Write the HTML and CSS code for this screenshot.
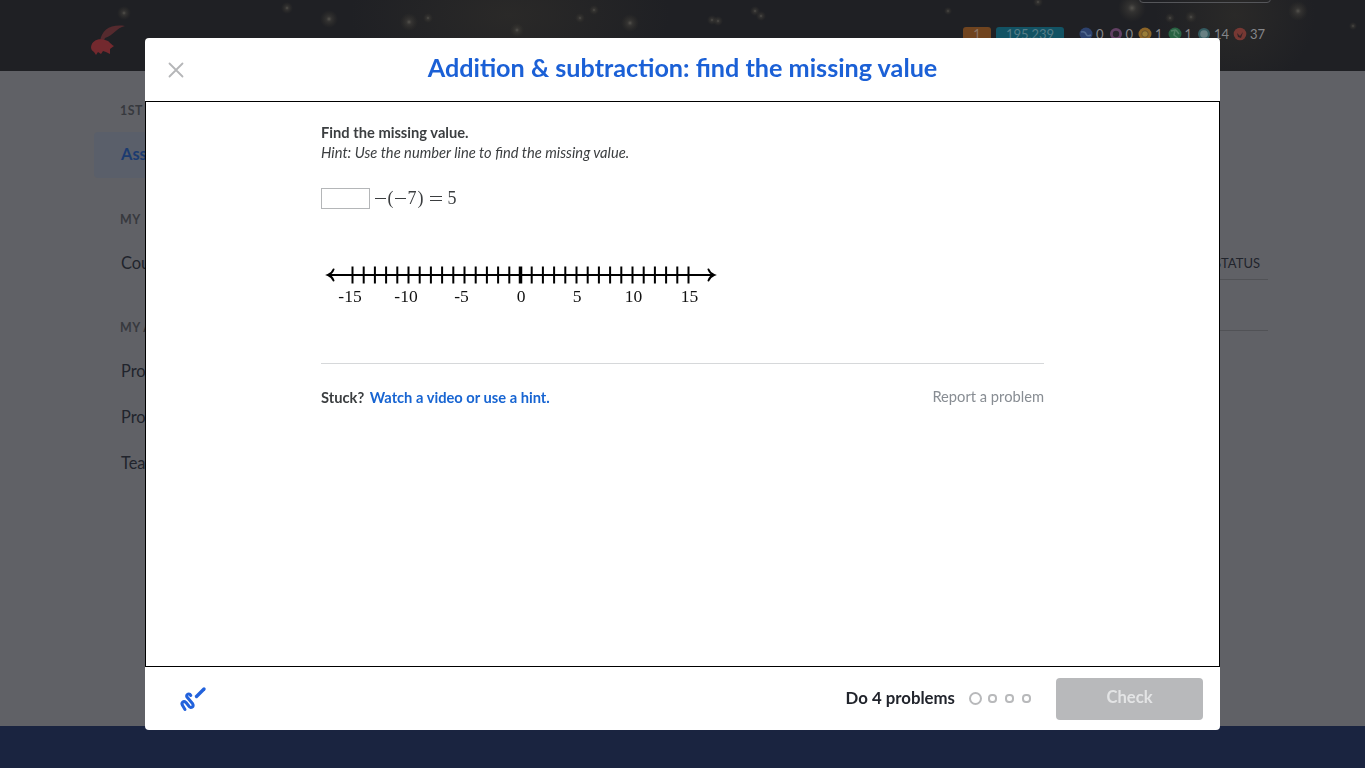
FILE: index.html
```
<!DOCTYPE html>
<html lang="en">
<head>
    <meta charset="UTF-8">
    <meta name="viewport" content="width=device-width, initial-scale=1.0">
    <title>Addition & subtraction: find the missing value</title>
    <link rel="stylesheet" href="styles.css">
</head>
<body>
    <div class="page">
        <header class="profile-header">
            <svg class="stars" width="1365" height="71" viewBox="0 0 1365 71">
                <defs>
                    <radialGradient id="star">
                        <stop offset="0" stop-color="#55534e"/>
                        <stop offset="0.3" stop-color="#403e3a" stop-opacity="0.6"/>
                        <stop offset="1" stop-color="#36332c" stop-opacity="0"/>
                    </radialGradient>
                    <radialGradient id="haze">
                        <stop offset="0" stop-color="#2a2928"/>
                        <stop offset="1" stop-color="#2a2928" stop-opacity="0"/>
                    </radialGradient>
                </defs>
                <ellipse cx="510" cy="15" rx="160" ry="80" fill="url(#haze)"/>
                <ellipse cx="1235" cy="15" rx="80" ry="75" fill="url(#haze)"/>
                <g fill="url(#star)">
                    <circle cx="124" cy="13" r="7"/>
                    <circle cx="287" cy="8" r="6"/>
                    <circle cx="329" cy="19" r="9"/>
                    <circle cx="409" cy="22" r="9"/>
                    <circle cx="428" cy="18" r="5"/>
                    <circle cx="517" cy="30" r="7"/>
                    <circle cx="580" cy="18" r="5"/>
                    <circle cx="594" cy="10" r="5"/>
                    <circle cx="630" cy="23" r="9"/>
                    <circle cx="712" cy="20" r="5"/>
                    <circle cx="718" cy="21" r="5"/>
                    <circle cx="755" cy="11" r="5"/>
                    <circle cx="761" cy="16" r="5"/>
                    <circle cx="948" cy="11" r="4"/>
                    <circle cx="1038" cy="2" r="5"/>
                    <circle cx="1132" cy="8" r="14"/>
                    <circle cx="1170" cy="18" r="5"/>
                    <circle cx="1191" cy="17" r="6"/>
                    <circle cx="1298" cy="11" r="10"/>
                    <circle cx="1353" cy="26" r="4"/>
                </g>
            </svg>
            <svg class="avatar" width="34" height="32" viewBox="0 0 34 32">
                <path d="M9 17C11 6 19 0 34 2C25 4 23 11 14 14L12 19Z" fill="#552a2e"/>
                <path d="M0 23C1 16 8 14 14 16C19 17 19 20 23 22L19 25L19 30L15 28L12 27L10 30L7 28L5 31L3 28C1 27 0 25 0 23Z" fill="#73292e"/>
            </svg>
            <div class="edit-button"></div>
            <div class="stats">
                <span class="streak">1</span>
                <span class="energy">195,239</span>
                <ul class="badges">
                    <li><svg width="14" height="14" viewBox="0 0 14 14"><circle cx="7" cy="7" r="6.5" fill="#2d426e"/><path d="M2 5Q6 4 7 7T12 8" fill="none" stroke="#536b90" stroke-width="1.6"/></svg>0</li>
                    <li><svg width="14" height="14" viewBox="0 0 14 14"><circle cx="7" cy="7" r="6" fill="#624064"/><circle cx="7" cy="7" r="3.2" fill="#29252d"/></svg>0</li>
                    <li><svg width="14" height="14" viewBox="0 0 14 14"><circle cx="7" cy="7" r="6.5" fill="#8c6427"/><circle cx="7" cy="7" r="3.3" fill="#9a7d38" stroke="#66502b"/></svg>1</li>
                    <li><svg width="14" height="14" viewBox="0 0 14 14"><circle cx="7" cy="7" r="6.5" fill="#286343"/><path d="M3 4L7 3L6 8L10 11M8 3L11 7" fill="none" stroke="#518065" stroke-width="1.5"/></svg>1</li>
                    <li><svg width="14" height="14" viewBox="0 0 14 14"><circle cx="7" cy="7" r="6" fill="#345b60"/><circle cx="7" cy="7" r="3.8" fill="#688083"/></svg>14</li>
                    <li><svg width="14" height="14" viewBox="0 0 14 14"><circle cx="7" cy="7" r="6.3" fill="#773833"/><path d="M4 6L7 9L10 5L8 11L5 10Z" fill="#312326"/></svg>37</li>
                </ul>
            </div>
        </header>

        <div class="page-body">
            <nav class="sidebar">
                <h3>1ST</h3>
                <a class="active">Ass</a>
                <h3>MY</h3>
                <a>Cou</a>
                <h3>MY A</h3>
                <a>Pro</a>
                <a>Pro</a>
                <a>Tea</a>
            </nav>
            <div class="assignments">
                <div class="assignments-head">STATUS</div>
                <div class="assignments-row"></div>
            </div>
        </div>

        <footer class="page-footer"></footer>
    </div>

    <div class="modal">
        <div class="modal-header">
            <button class="close" aria-label="Close">
                <svg width="16" height="16" viewBox="0 0 16 16"><path d="M1.5 1.5L14.5 14.5M14.5 1.5L1.5 14.5" stroke="#b5b6b8" stroke-width="1.8" stroke-linecap="round"/></svg>
            </button>
            <h1>Addition &amp; subtraction: find the missing value</h1>
        </div>

        <div class="modal-content">
            <div class="exercise">
                <p class="question">Find the missing value.</p>
                <p class="hint">Hint: Use the number line to find the missing value.</p>

                <div class="equation">
                    <input type="text" class="answer" aria-label="Answer">
                    <svg width="86" height="24" viewBox="0 0 86 24">
                        <g stroke="#3b3e40" stroke-width="1">
                            <path d="M1 12.5H12M21 12.5H32M56 10.5H68M56 14.5H68"/>
                        </g>
                        <text x="13.5" y="18">(</text>
                        <text x="33.5" y="18">7</text>
                        <text x="43.5" y="18">)</text>
                        <text x="73.5" y="18">5</text>
                    </svg>
                </div>

                <svg class="number-line" width="400" height="50" viewBox="0 0 400 50">
                    <g fill="none" stroke="#000" stroke-width="2">
                        <path d="M7 15H393"/>
                        <path d="M12.5 9.5Q11 13.5 7 15Q11 16.5 12.5 20.5M387.5 9.5Q389 13.5 393 15Q389 16.5 387.5 20.5" stroke-linecap="round"/>
                        <path d="M31.5 6.5v17M42.7 6.5v17M53.9 6.5v17M65.1 6.5v17M76.3 6.5v17M87.5 6.5v17M98.7 6.5v17M109.9 6.5v17M121.1 6.5v17M132.3 6.5v17M143.5 6.5v17M154.7 6.5v17M165.9 6.5v17M177.1 6.5v17M188.3 6.5v17M210.7 6.5v17M221.9 6.5v17M233.1 6.5v17M244.3 6.5v17M255.5 6.5v17M266.7 6.5v17M277.9 6.5v17M289.1 6.5v17M300.3 6.5v17M311.5 6.5v17M322.7 6.5v17M333.9 6.5v17M345.1 6.5v17M356.3 6.5v17M367.5 6.5v17"/>
                        <path d="M199.5 6.5v17" stroke-width="3.5"/>
                    </g>
                    <g text-anchor="middle">
                        <text x="29" y="42">-15</text>
                        <text x="85" y="42">-10</text>
                        <text x="140.5" y="42">-5</text>
                        <text x="200" y="42">0</text>
                        <text x="256" y="42">5</text>
                        <text x="312.5" y="42">10</text>
                        <text x="368.5" y="42">15</text>
                    </g>
                </svg>

                <div class="help">
                    <span class="stuck">Stuck? <a>Watch a video or use a hint.</a></span>
                    <a class="report">Report a problem</a>
                </div>
            </div>
        </div>

        <div class="modal-footer">
            <svg class="scratchpad" width="28" height="28" viewBox="0 0 28 28">
                <g fill="none" stroke="#2262dc" stroke-linecap="round" stroke-linejoin="round">
                    <path d="M11.8 10.5C10.5 7.8 6.8 9 7.8 11.8L13.5 18.5C15.5 22 11.5 24 9.8 21L7 17.5C4.5 15.2 1.8 18 3.6 20.5L6 24.5" stroke-width="3"/>
                    <path d="M17.5 11.5L25 4" stroke-width="3.4"/>
                </g>
            </svg>
            <div class="progress">
                <span class="progress-label">Do 4 problems</span>
                <span class="dot current"></span>
                <span class="dot"></span>
                <span class="dot"></span>
                <span class="dot"></span>
            </div>
            <button class="check" disabled>Check</button>
        </div>
    </div>
</body>
</html>
```
FILE: styles.css
```
* {
    box-sizing: border-box;
}
body {
    margin: 0;
    font-family: Lato, sans-serif;
    color: #21242c;
    overflow: hidden;
}
h1, h3, p, ul {
    margin: 0;
    padding: 0;
}
.page {
    height: 768px;
    display: flex;
    flex-direction: column;
    background: #606166;
}
.profile-header {
    position: relative;
    height: 71px;
    padding: 0 94px 0 91px;
    display: flex;
    justify-content: space-between;
    background: #1f2024;
}
.stars {
    position: absolute;
    left: 0;
    top: 0;
}
.avatar {
    position: relative;
    margin-top: 24px;
}
.edit-button {
    position: absolute;
    top: -10px;
    right: 94px;
    width: 132px;
    height: 13px;
    border: 1px solid #55565a;
    border-radius: 4px;
}
.stats {
    position: relative;
    display: flex;
    align-items: flex-start;
    width: 308px;
    padding-top: 26px;
    font-size: 13px;
    line-height: 16px;
    color: #85868a;
}
.streak, .energy {
    height: 18px;
    border-radius: 3px;
    text-align: center;
    line-height: 15px;
}
.streak {
    width: 28px;
    margin-top: 1px;
    background: #70441f;
    color: #8a7566;
}
.energy {
    width: 68px;
    margin: 1px 15px 0 5px;
    background: #125364;
    color: #577d88;
}
.badges {
    display: flex;
    list-style: none;
}
.badges li {
    display: flex;
    align-items: center;
    gap: 3px;
    width: 29.5px;
    flex-shrink: 0;
}
.badges li:nth-child(5) {
    width: 36px;
}
.badges svg {
    flex-shrink: 0;
}
.page-body {
    flex: 1;
    display: flex;
    justify-content: space-between;
    padding: 0 97px 0 94px;
}
.sidebar {
    width: 220px;
    padding-top: 32px;
}
.sidebar h3 {
    padding-left: 26px;
    font-size: 12.4px;
    font-weight: 700;
    line-height: 16px;
    letter-spacing: 0.5px;
    color: #37393e;
}
.sidebar a {
    display: block;
    height: 46px;
    padding-left: 27px;
    font-size: 16.4px;
    line-height: 43px;
}
.sidebar h3 + a {
    margin-top: 13px;
}
.sidebar a + h3 {
    margin-top: 33px;
}
.sidebar .active {
    margin-bottom: 34px;
    border-radius: 4px;
    background: #5a5f6a;
    font-weight: 700;
    line-height: 44px;
    color: #1c3b70;
}
.assignments {
    width: 300px;
    padding-top: 182px;
}
.assignments-head {
    height: 27px;
    padding-right: 8px;
    border-bottom: 1px solid #515256;
    text-align: right;
    font-size: 13px;
    line-height: 20px;
}
.assignments-row {
    height: 51px;
    border-bottom: 1px solid #515256;
}
.page-footer {
    height: 42px;
    background: #1a2440;
}

/* exercise dialog */
.modal {
    position: fixed;
    top: 38px;
    left: 145px;
    width: 1075px;
    height: 692px;
    display: flex;
    flex-direction: column;
    background: #fff;
    border-radius: 4px;
    overflow: hidden;
}
.modal-header {
    height: 63px;
    padding: 0 23px;
    display: flex;
    align-items: center;
}
.close {
    width: 16px;
    height: 16px;
    padding: 0;
    border: none;
    background: none;
}
.close svg {
    display: block;
}
.modal-header h1 {
    flex: 1;
    padding-right: 16px;
    text-align: center;
    font-size: 25.2px;
    font-weight: 700;
    line-height: 58px;
    height: 63px;
    color: #1b60d6;
}
.modal-content {
    height: 566px;
    border: 1px solid #000;
    padding: 20px 175px 0;
}
.exercise {
    width: 723px;
    font-size: 14.7px;
    line-height: 20px;
    color: #3b3e40;
}
.question {
    font-weight: 700;
}
.hint {
    font-style: italic;
}
.equation {
    display: flex;
    align-items: center;
    gap: 4px;
    height: 24px;
    margin-top: 24px;
}
.equation text {
    font-family: "Liberation Serif", serif;
    font-size: 18px;
    fill: #3b3e40;
}
.answer {
    width: 49px;
    height: 21px;
    padding: 0;
    border: 1px solid #b4b6b8;
    background: #fff;
}
.number-line {
    display: block;
    margin-top: 50px;
}
.number-line text {
    font-family: "Liberation Serif", serif;
    font-size: 17.5px;
    fill: #111;
}
.help {
    display: flex;
    justify-content: space-between;
    margin-top: 53px;
    padding-top: 23px;
    border-top: 1px solid #d6d8da;
}
.stuck {
    font-weight: 700;
}
.stuck a {
    margin-left: 2px;
    color: #1865d2;
}
.report {
    margin-top: -1px;
    color: #888d93;
}
.modal-footer {
    height: 63px;
    display: flex;
    align-items: center;
    padding: 0 17px 0 34px;
}
.progress {
    display: flex;
    align-items: center;
    margin-left: auto;
}
.progress-label {
    margin-right: 14px;
    padding-bottom: 2px;
    font-size: 16.8px;
    font-weight: 700;
    line-height: 20px;
}
.dot {
    width: 9px;
    height: 9px;
    margin-right: 8px;
    border: 2px solid #b8b9bb;
    border-radius: 4px;
}
.dot.current {
    width: 13px;
    height: 13px;
    margin-right: 6px;
    border-radius: 50%;
}
.check {
    width: 147px;
    height: 42px;
    margin-left: 17px;
    padding: 0 0 3px;
    border: none;
    border-radius: 4px;
    background: #b8b9bb;
    font-family: Lato, sans-serif;
    font-size: 16.6px;
    font-weight: 700;
    color: #e3e4e5;
}
```
